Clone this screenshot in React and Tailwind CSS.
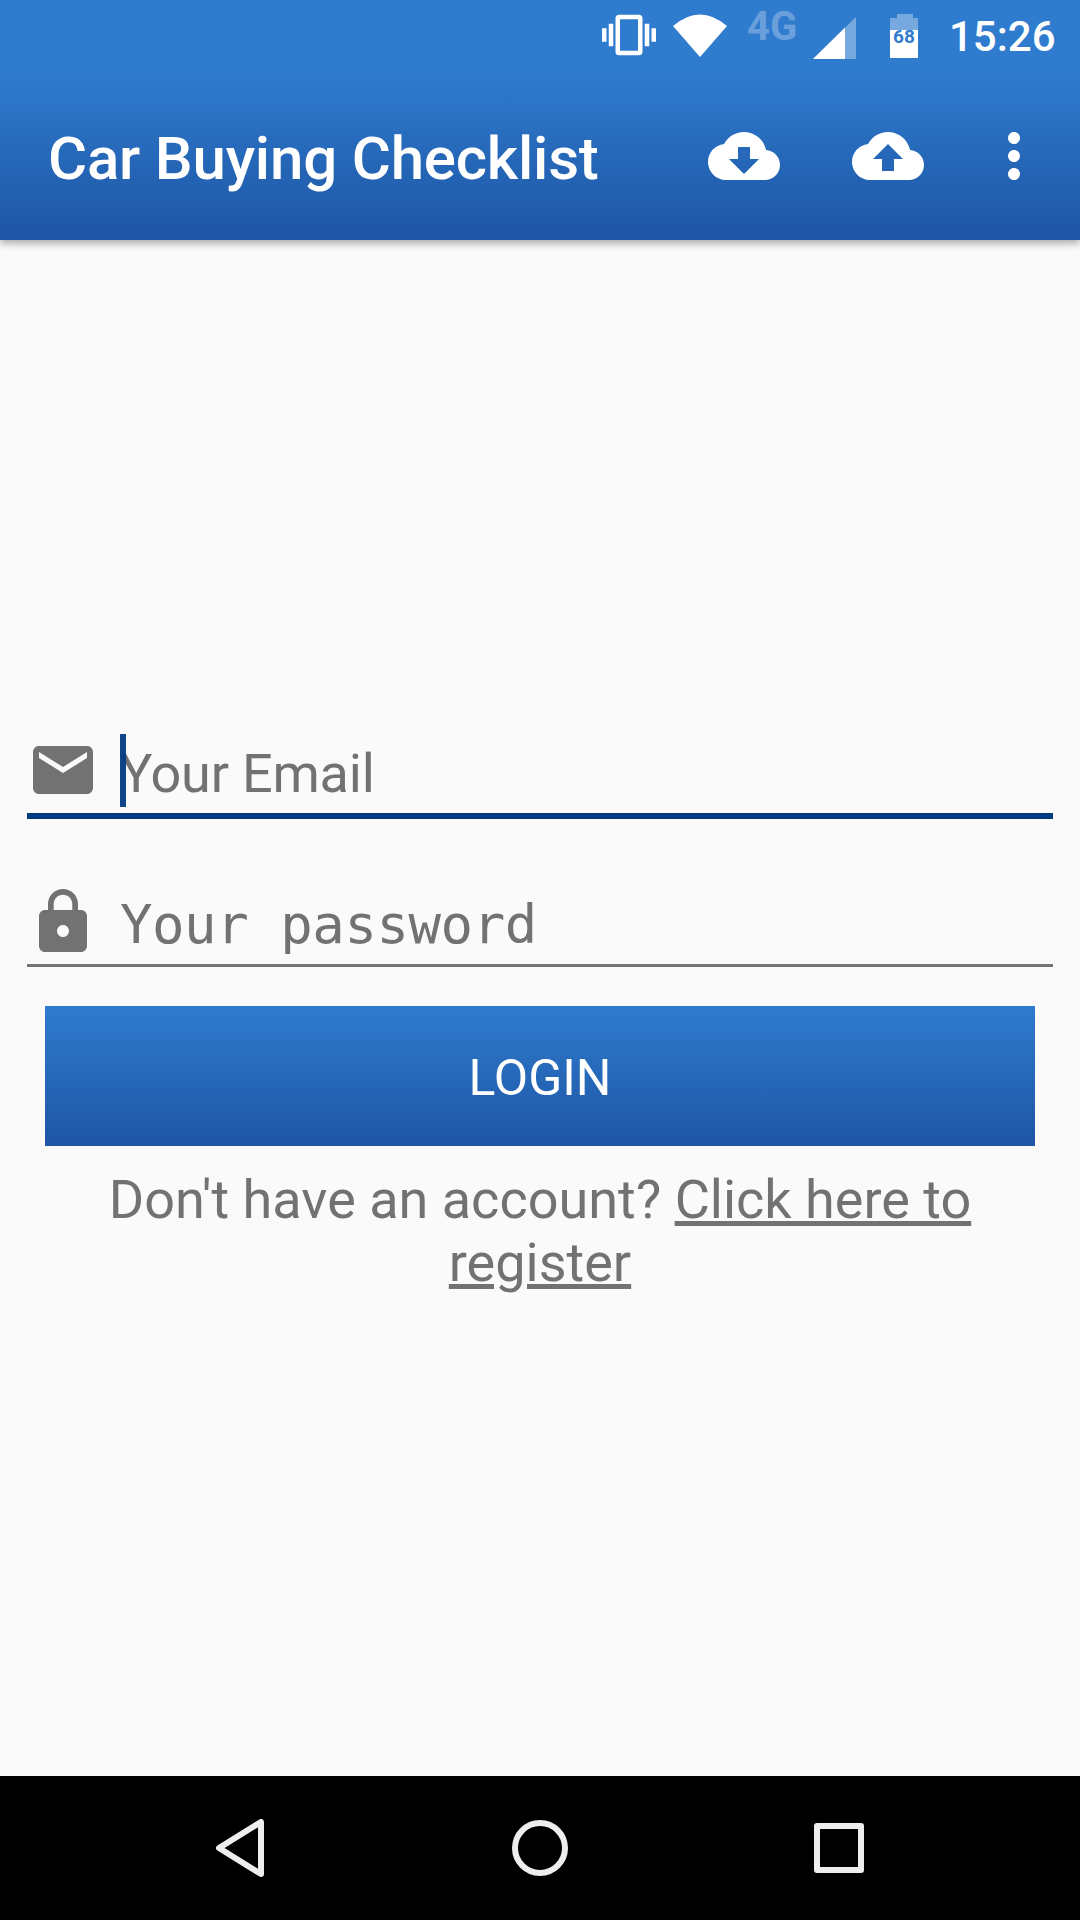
import React from "react";

const cloudBase =
  "M19.35 10.04C18.67 6.59 15.64 4 12 4 9.11 4 6.6 5.64 5.35 8.04 2.34 8.36 0 10.91 0 14c0 3.31 2.69 6 6 6h13c2.76 0 5-2.24 5-5 0-2.64-2.05-4.78-4.65-4.96z";

function Icon({ d, className }) {
  return (
    <svg viewBox="0 0 24 24" className={className} fill="currentColor">
      <path d={d} />
    </svg>
  );
}

function StatusBar() {
  return (
    <div className="flex h-[72px] items-start bg-[#2f7bce] pl-[602px] text-white">
      <Icon
        className="mt-[8px] h-[54px] w-[54px] shrink-0"
        d="M0 15h2V9H0v6zm3 2h2V7H3v10zm19-8v6h2V9h-2zm-3 8h2V7h-2v10zM16.5 3h-9C6.67 3 6 3.67 6 4.5v15c0 .83.67 1.5 1.5 1.5h9c.83 0 1.5-.67 1.5-1.5v-15c0-.83-.67-1.5-1.5-1.5zM16 19H8V5h8v14z"
      />
      <svg viewBox="0 0 54 43" className="ml-[17px] mt-[14px] h-[43px] w-[54px] shrink-0" fill="currentColor">
        <path d="M27 43L0 12Q27 -11 54 12Z" />
      </svg>
      <span className="ml-[20px] mt-[5px] w-[51px] shrink-0 text-[40px] font-bold leading-[44px] tracking-[0px] text-white/30">
        4G
      </span>
      <svg viewBox="0 0 43 42" className="ml-[15px] mt-[17px] h-[42px] w-[43px] shrink-0" fill="currentColor">
        <path d="M43 0V42H0Z" fillOpacity="0.35" />
        <path d="M32 10.5V42H0Z" />
      </svg>
      <div className="relative ml-[34px] mt-[14px] h-[44px] w-[28px] shrink-0">
        <svg viewBox="0 0 28 44" className="h-[44px] w-[28px]" fill="currentColor">
          <path d="M7 0H23V4H28V44H0V4H7Z" fillOpacity="0.35" />
          <path d="M0 16H28V44H0Z" />
        </svg>
        <span className="absolute inset-x-0 top-[15px] text-center text-[19px] font-bold leading-[16px] text-[#2f7bce]">
          68
        </span>
      </div>
      <span className="ml-[31px] mt-[16px] text-[42px] font-medium leading-[42px]">15:26</span>
    </div>
  );
}

function Toolbar() {
  return (
    <div className="flex h-[168px] items-center bg-gradient-to-b from-[#2f7bce] to-[#1e55a4] text-white">
      <h1 className="ml-[48px] mt-[5px] w-[660px] text-[60px] font-medium leading-[72px] tracking-[-0.2px]">
        Car Buying Checklist
      </h1>
      <Icon className="h-[72px] w-[72px] shrink-0" d={cloudBase + "M17 13l-5 5-5-5h3V9h4v4h3z"} />
      <Icon className="ml-[72px] h-[72px] w-[72px] shrink-0" d={cloudBase + "M14 13v4h-4v-4H7l5-5 5 5h-3z"} />
      <Icon
        className="ml-[54px] h-[72px] w-[72px] shrink-0"
        d="M12 8c1.1 0 2-.9 2-2s-.9-2-2-2-2 .9-2 2 .9 2 2 2zm0 2c-1.1 0-2 .9-2 2s.9 2 2 2 2-.9 2-2-.9-2-2-2zm0 6c-1.1 0-2 .9-2 2s.9 2 2 2 2-.9 2-2-.9-2-2-2z"
      />
    </div>
  );
}

function LoginForm() {
  return (
    <main className="flex flex-1 flex-col px-[27px] pt-[494px] text-[#727272]">
      <div className="flex h-[85px] items-start border-b-[6px] border-[#023a80]">
        <Icon
          className="h-[72px] w-[72px] shrink-0"
          d="M20 4H4c-1.1 0-1.99.9-1.99 2L2 18c0 1.1.9 2 2 2h16c1.1 0 2-.9 2-2V6c0-1.1-.9-2-2-2zm0 4l-8 5-8-5V6l8 5 8-5v2z"
        />
        <div className="relative ml-[21px] flex-1">
          <span className="block pt-[8px] text-[54px] leading-[64px] tracking-[-0.2px]">Your Email</span>
          <span className="absolute left-0 top-0 h-[73px] w-[6px] bg-[#023a80] opacity-95" />
        </div>
      </div>
      <div className="mt-[62px] flex h-[86px] items-start border-b-[3px] border-[#757575]">
        <Icon
          className="mt-[5px] h-[72px] w-[72px] shrink-0"
          d="M18 8h-1V6c0-2.76-2.24-5-5-5S7 3.24 7 6v2H6c-1.1 0-2 .9-2 2v10c0 1.1.9 2 2 2h12c1.1 0 2-.9 2-2V10c0-1.1-.9-2-2-2zm-6 9c-1.1 0-2-.9-2-2s.9-2 2-2 2 .9 2 2-.9 2-2 2zm3.1-9H8.9V6c0-1.71 1.39-3.1 3.1-3.1 1.71 0 3.1 1.39 3.1 3.1v2z"
        />
        <span className="ml-[21px] pt-[12px] font-['DejaVu_Sans_Mono',monospace] text-[54px] leading-[64px] tracking-[-0.45px]">
          Your password
        </span>
      </div>
      <button className="mx-[18px] mt-[39px] h-[140px] bg-gradient-to-b from-[#2f7bce] to-[#1e55a4] pt-[4px] text-[50px] leading-[56px] text-white">
        LOGIN
      </button>
      <p className="mx-[18px] mt-[22px] text-center text-[54px] leading-[63px]">
        Don't have an account? <span className="underline">Click here to</span>
        <br />
        <span className="underline">register</span>
      </p>
    </main>
  );
}

function NavBar() {
  return (
    <div className="flex h-[144px] items-start bg-black pl-[216px] pt-[43px] text-[#eeeeee]">
      <svg viewBox="0 0 48 58" className="h-[58px] w-[48px] shrink-0" fill="none" stroke="currentColor" strokeWidth="6" strokeLinejoin="round">
        <path d="M45 3V55L3 29Z" />
      </svg>
      <div className="ml-[248px] mt-[1px] h-[56px] w-[56px] shrink-0 rounded-full border-[6px] border-[#eeeeee]" />
      <div className="ml-[246px] mt-[4px] h-[50px] w-[50px] shrink-0 rounded-[3px] border-[6px] border-[#eeeeee]" />
    </div>
  );
}

export default function App() {
  return (
    <div className="flex h-[1920px] w-[1080px] flex-col overflow-hidden bg-[#fafafa] font-['Roboto',sans-serif]">
      <header className="relative z-10 shadow-[0_3px_8px_rgba(0,0,0,0.35)]">
        <StatusBar />
        <Toolbar />
      </header>
      <LoginForm />
      <NavBar />
    </div>
  );
}
